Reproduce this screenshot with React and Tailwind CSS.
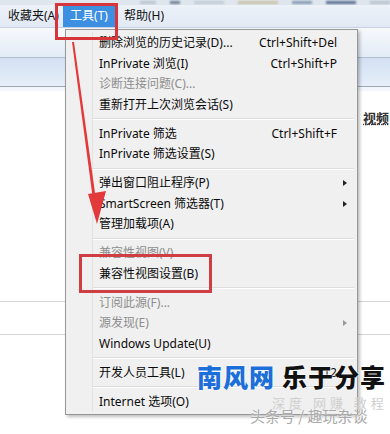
import React from "react";

const FONT = { fontFamily: '"Noto Sans", "Noto Sans CJK SC", sans-serif' };
const CJK = { fontFamily: '"Noto Sans CJK SC", "Noto Sans", sans-serif' };

function Item({ label, shortcut, disabled, arrow }) {
  return (
    <div
      className={`h-[20.5px] flex items-center pl-[33px] pr-[10px] text-[12px] leading-none ${
        disabled ? "text-[#8d8d8d]" : "text-[#0a0a0a]"
      }`}
    >
      <span className="flex-1 whitespace-nowrap">{label}</span>
      {shortcut && <span className="mr-[10px] whitespace-nowrap">{shortcut}</span>}
      {arrow && (
        <span
          className={`w-0 h-0 border-y-[3.5px] border-y-transparent border-l-[4px] ${
            disabled ? "border-l-[#9a9a9a]" : "border-l-[#222]"
          }`}
        />
      )}
    </div>
  );
}

function Sep() {
  return (
    <div className="h-[8.5px] flex flex-col justify-center pl-[27px] pr-[3px]">
      <div className="h-px bg-[#dedede]" />
      <div className="h-px bg-white" />
    </div>
  );
}

export default function App() {
  return (
    <div className="relative w-[390px] h-[434px] overflow-hidden bg-white" style={FONT}>
      {/* blurred toolbar remnant */}
      <div className="h-[5px] bg-[#dfe6ee] flex items-center gap-[14px] pl-[140px] overflow-hidden">
        <div className="w-[16px] h-[3px] bg-[#b9c4d0] blur-[1px]" />
        <div className="w-[10px] h-[3px] bg-[#6f7f95] blur-[1px]" />
        <div className="w-[30px] h-[3px] bg-[#c2cbd6] blur-[1px]" />
        <div className="w-[40px] h-[3px] bg-[#c9c2a8] blur-[1px]" />
        <div className="w-[20px] h-[3px] bg-[#8899b4] blur-[1px]" />
        <div className="w-[30px] h-[3px] bg-[#5a6f92] blur-[1px]" />
        <div className="w-[20px] h-[3px] bg-[#b7c2cf] blur-[1px]" />
      </div>

      {/* menu bar */}
      <div className="h-[23px] flex items-stretch bg-gradient-to-b from-[#edf2f9] to-[#e1e9f4] border-b border-[#c6d2e1] text-[12px] text-[#111]">
        <div className="flex items-center pl-[8px] w-[63px]">收藏夹(A)</div>
        <div className="flex items-center justify-center w-[52px] bg-[#3d8fe2] text-white">工具(T)</div>
        <div className="flex items-center pl-[9px]">帮助(H)</div>
      </div>

      {/* command bar */}
      <div className="h-[30px] bg-gradient-to-b from-[#f7f9fc] to-[#e3ebf6] border-b border-[#aebdd0]" />
      {/* tab band */}
      <div className="h-[29px] bg-gradient-to-b from-[#d2e0f3] to-[#e6eef9] border-b border-[#9ea8b4]" />

      {/* page content behind the menu */}
      <div className="flex flex-col">
        <div className="h-[4px] bg-[#f3f6fa]" />
        <div className="pl-[363px] pt-[14px] h-[210px]">
          <span className="text-[13px] font-bold text-[#333] underline decoration-dotted whitespace-nowrap" style={CJK}>
            视频
          </span>
        </div>
        <div className="h-px bg-[#d4d4d4]" />
        <div className="h-[32px]" />
        <div className="h-px bg-[#d4d4d4]" />
      </div>

      {/* dropdown menu */}
      <div className="absolute left-[65px] top-[29px] w-[293px] h-[386px] bg-[#f0f0f0] border border-[#979797] shadow-[2px_2px_3px_rgba(0,0,0,0.25)] pt-[3px]">
        <div className="absolute left-[26px] top-[2px] bottom-[2px] w-px bg-[#e2e2e2]" />
        <div className="relative flex flex-col">
          <Item label="删除浏览的历史记录(D)..." shortcut="Ctrl+Shift+Del" />
          <Item label="InPrivate 浏览(I)" shortcut="Ctrl+Shift+P" />
          <Item label="诊断连接问题(C)..." disabled />
          <Item label="重新打开上次浏览会话(S)" />
          <Sep />
          <Item label="InPrivate 筛选" shortcut="Ctrl+Shift+F" />
          <Item label="InPrivate 筛选设置(S)" />
          <Sep />
          <Item label="弹出窗口阻止程序(P)" arrow />
          <Item label="SmartScreen 筛选器(T)" arrow />
          <Item label="管理加载项(A)" />
          <Sep />
          <Item label="兼容性视图(V)" disabled />
          <Item label="兼容性视图设置(B)" />
          <Sep />
          <Item label="订阅此源(F)..." disabled />
          <Item label="源发现(E)" disabled arrow />
          <Item label="Windows Update(U)" />
          <Sep />
          <Item label="开发人员工具(L)" shortcut="F12" />
          <Sep />
          <Item label="Internet 选项(O)" />
        </div>
      </div>

      {/* red highlight boxes */}
      <div className="absolute left-[55px] top-[3px] w-[63px] h-[37px] border-[3px] border-[#d8353a]" />
      <div className="absolute left-[79px] top-[254px] w-[133px] h-[39px] border-[3px] border-[#cf3e42]" />

      {/* red arrow */}
      <svg className="absolute left-0 top-0" width="390" height="434" viewBox="0 0 390 434">
        <path d="M72 42 L74 42 L96 200 L93 200 Z" fill="#e23a3a" />
        <path d="M88 194 L106 191 L97 224 Z" fill="#e23a3a" />
      </svg>

      {/* watermark */}
      <div className="absolute left-[197px] top-[364px] flex items-center gap-[7px] leading-none" style={CJK}>
        <span
          className="text-[25px] font-black text-[#1c6fd9] tracking-[1px]"
          style={{ textShadow: "0 0 2px #fff, 0 0 2px #fff" }}
        >
          南风网
        </span>
        <span
          className="text-[25px] font-black text-[#111] tracking-[1px]"
          style={{ textShadow: "0 0 2px #fff, 0 0 2px #fff" }}
        >
          乐于分享
        </span>
      </div>
      <div className="absolute left-[272px] top-[396px] text-[13px] text-[#cfcfcf] tracking-[4px] leading-none whitespace-nowrap" style={CJK}>
        深度 网赚 教程
      </div>
      <div
        className="absolute left-[250px] top-[408px] text-[15px] text-[#a9a9a9] leading-none whitespace-nowrap"
        style={{ ...CJK, textShadow: "0 0 2px #fff" }}
      >
        头条号 / 趣玩杂谈
      </div>
    </div>
  );
}
